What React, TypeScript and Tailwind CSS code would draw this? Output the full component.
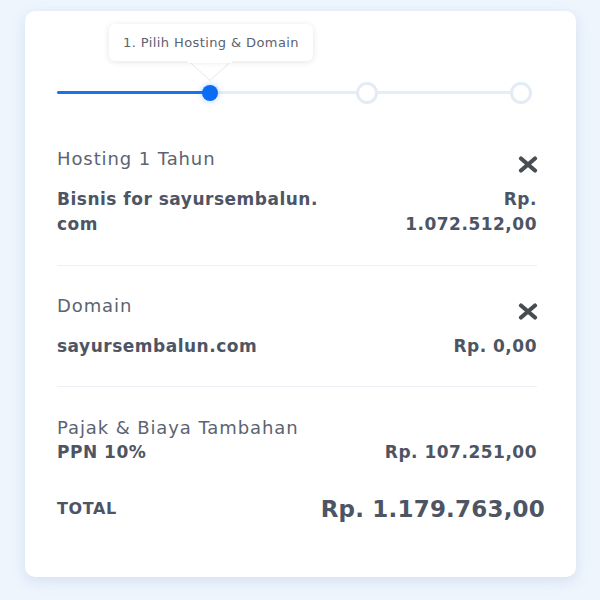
const font = { fontFamily: '"DejaVu Sans", Verdana, sans-serif' };

function CloseIcon() {
    return (
        <svg width="20" height="17" viewBox="0 0 20 17" className="shrink-0">
            <path d="M3 2.5 L17 14.5 M17 2.5 L3 14.5" stroke="#4a4c53" strokeWidth="4.2" strokeLinecap="round" />
        </svg>
    );
}

function Stepper() {
    return (
        <div className="relative pt-[13px]">
            {/* tooltip */}
            <div className="relative ml-[52px] w-[204px] h-[37px]">
                <svg width="46" height="22" viewBox="0 0 46 22" className="absolute left-[78px] top-[36px]">
                    <path d="M0 0.5 L23 21 L46 0.5 Z" fill="white" />
                    <path d="M1 0.5 L23 20.5 L45 0.5" fill="none" stroke="#e6e8ed" strokeWidth="1" />
                </svg>
                <div className="relative w-full h-full bg-white rounded-md shadow-[0_1px_6px_rgba(0,0,0,0.11)] flex items-center justify-center text-[13px] tracking-[0.4px] text-[#5b6270]">
                    1. Pilih Hosting &amp; Domain
                </div>
                <svg width="44" height="6" className="absolute left-[79px] top-[33px]">
                    <rect width="44" height="6" fill="white" />
                </svg>
            </div>
            {/* track */}
            <div className="relative h-[24px] mt-[20px]">
                <div className="absolute left-0 right-[6px] top-[10px] h-[3px] bg-[#e6edf5] rounded-full" />
                <div className="absolute left-0 w-[150px] top-[10px] h-[3px] bg-[#1a73e8] rounded-full" />
                <div className="absolute left-[145px] top-[4px] w-[16px] h-[16px] rounded-full bg-[#0a6cf5] shadow-[0_0_6px_rgba(13,110,253,0.35)]" />
                <div className="absolute left-[299px] top-[1px] w-[22px] h-[22px] rounded-full bg-white border-[3px] border-[#e3ebf4]" />
                <div className="absolute left-[453px] top-[1px] w-[22px] h-[22px] rounded-full bg-white border-[3px] border-[#e3ebf4]" />
            </div>
        </div>
    );
}

function Item({ label, name, price }: { label: string; name: React.ReactNode; price: React.ReactNode }) {
    return (
        <div>
            <div className="flex justify-between items-start">
                <div className="text-[18px] tracking-[0.9px] text-[#5b6472] leading-[22px]">{label}</div>
                <div className="mt-[8px] mr-[-1px]">
                    <CloseIcon />
                </div>
            </div>
            <div className="flex justify-between mt-[14px] text-[17px] tracking-[0.5px] font-bold text-[#4d5564] leading-[25px]">
                <div>{name}</div>
                <div className="text-right">{price}</div>
            </div>
        </div>
    );
}

export default function App() {
    return (
        <div className="w-[600px] h-[600px] bg-[#eef5fd] pt-[11px] pl-[25px]" style={font}>
            <div className="w-[551px] h-[566px] bg-white rounded-[10px] shadow-[0_4px_14px_rgba(180,200,225,0.45)] pl-[32px] pr-[39px]">
                <Stepper />

                <div className="mt-[43px]">
                    <Item
                        label="Hosting 1 Tahun"
                        name={<>Bisnis for sayursembalun.<br />com</>}
                        price={<>Rp.<br />1.072.512,00</>}
                    />
                </div>
                <div className="h-px bg-[#eceff3] mt-[28px]" />

                <div className="mt-[29px]">
                    <Item label="Domain" name="sayursembalun.com" price="Rp. 0,00" />
                </div>
                <div className="h-px bg-[#eceff3] mt-[27px]" />

                <div className="mt-[30px]">
                    <div className="text-[18px] tracking-[0.9px] text-[#5b6472] leading-[22px]">Pajak &amp; Biaya Tambahan</div>
                    <div className="flex justify-between mt-[1px] text-[17px] tracking-[0.5px] font-bold text-[#4d5564] leading-[25px]">
                        <div>PPN 10%</div>
                        <div>Rp. 107.251,00</div>
                    </div>
                </div>

                <div className="flex justify-between items-center mt-[27px] text-[#4d5564] font-bold">
                    <div className="text-[16px] tracking-[0.6px]">TOTAL</div>
                    <div className="text-[23px] tracking-[0.2px] mr-[-8px]">Rp. 1.179.763,00</div>
                </div>
            </div>
        </div>
    );
}
